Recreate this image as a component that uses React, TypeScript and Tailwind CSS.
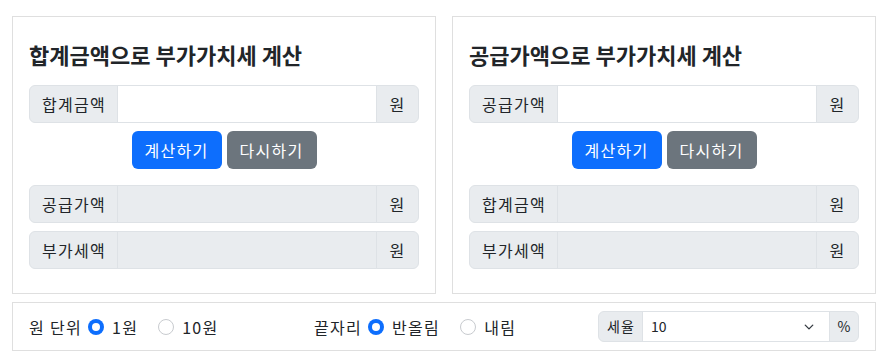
import React from 'react';

const font = { fontFamily: '"Noto Sans CJK KR", "Noto Sans", sans-serif' };

interface RowProps {
  label: string;
  readOnly?: boolean;
}

const AmountRow: React.FC<RowProps> = ({ label, readOnly }) => (
  <div className="flex h-[38px] w-full text-[16px] tracking-[1.3px] text-[#212529]">
    <span className="flex items-center w-[89px] pl-3 bg-[#e9ecef] border border-[#dee2e6] rounded-l-[6px] whitespace-nowrap">
      {label}
    </span>
    <input
      readOnly={readOnly}
      disabled={readOnly}
      className={`flex-1 min-w-0 -ml-px border border-[#dee2e6] px-3 outline-none ${readOnly ? 'bg-[#e9ecef]' : 'bg-white'}`}
    />
    <span className="flex items-center justify-center w-[43px] -ml-px bg-[#e9ecef] border border-[#dee2e6] rounded-r-[6px]">원</span>
  </div>
);

const CalcCard: React.FC<{ title: string; input: string; outputs: string[] }> = ({ title, input, outputs }) => (
  <div className="flex-1 border border-[#dfdfdf] bg-white p-4">
    <h4 className="text-[22px] font-bold leading-[28px] text-[#212529] pt-[7px] pb-[17px]">{title}</h4>
    <AmountRow label={input} />
    <div className="flex justify-center gap-[5px] mt-2 mb-4 tracking-[1.3px]">
      <button className="h-[38px] w-[90px] rounded-[6px] bg-[#0d6efd] text-white text-[16px]">계산하기</button>
      <button className="h-[38px] w-[90px] rounded-[6px] bg-[#6c757d] text-white text-[16px]">다시하기</button>
    </div>
    <div className="flex flex-col gap-2 mb-2">
      {outputs.map((o) => (
        <AmountRow key={o} label={o} readOnly />
      ))}
    </div>
  </div>
);

const Radio: React.FC<{ checked?: boolean; label: string }> = ({ checked, label }) => (
  <label className="flex items-center mr-5">
    {checked ? (
      <span className="w-4 h-4 rounded-full bg-[#0d6efd] flex items-center justify-center">
        <span className="w-2 h-2 rounded-full bg-white" />
      </span>
    ) : (
      <span className="w-4 h-4 rounded-full border border-[#c8cbcf] bg-white" />
    )}
    <span className="ml-2">{label}</span>
  </label>
);

export default function App() {
  return (
    <div style={font} className="pt-4 pl-3 pr-[6px] text-[#212529]">
      <div className="flex gap-4 mb-2">
        <CalcCard title="합계금액으로 부가가치세 계산" input="합계금액" outputs={['공급가액', '부가세액']} />
        <CalcCard title="공급가액으로 부가가치세 계산" input="공급가액" outputs={['합계금액', '부가세액']} />
      </div>
      <div className="border border-[#dfdfdf] px-4 py-2 grid grid-cols-[285px_284px_1fr] items-center text-[16px] tracking-[1.3px]">
        <div className="flex items-center">
          <span className="mr-[6px]">원 단위</span>
          <Radio checked label="1원" />
          <Radio label="10원" />
        </div>
        <div className="flex items-center">
          <span className="mr-[6px]">끝자리</span>
          <Radio checked label="반올림" />
          <Radio label="내림" />
        </div>
        <div className="flex h-[31px] text-[14px] tracking-[1.1px]">
          <span className="flex items-center w-[45px] pl-2 bg-[#e9ecef] border border-[#dee2e6] rounded-l-[6px]">세율</span>
          <div className="relative flex-1 -ml-px border border-[#dee2e6] bg-white flex items-center pl-2 tracking-normal">
            <span>10</span>
            <svg className="absolute right-[12px] top-1/2 -translate-y-1/2" width="16" height="12" viewBox="0 0 16 16" fill="none">
              <path d="m3 5.5 5 5 5-5" stroke="#343a40" strokeWidth="1.8" strokeLinecap="round" strokeLinejoin="round" />
            </svg>
          </div>
          <span className="flex items-center justify-center w-[30px] -ml-px bg-[#e9ecef] border border-[#dee2e6] rounded-r-[6px] tracking-normal">%</span>
        </div>
      </div>
    </div>
  );
}
